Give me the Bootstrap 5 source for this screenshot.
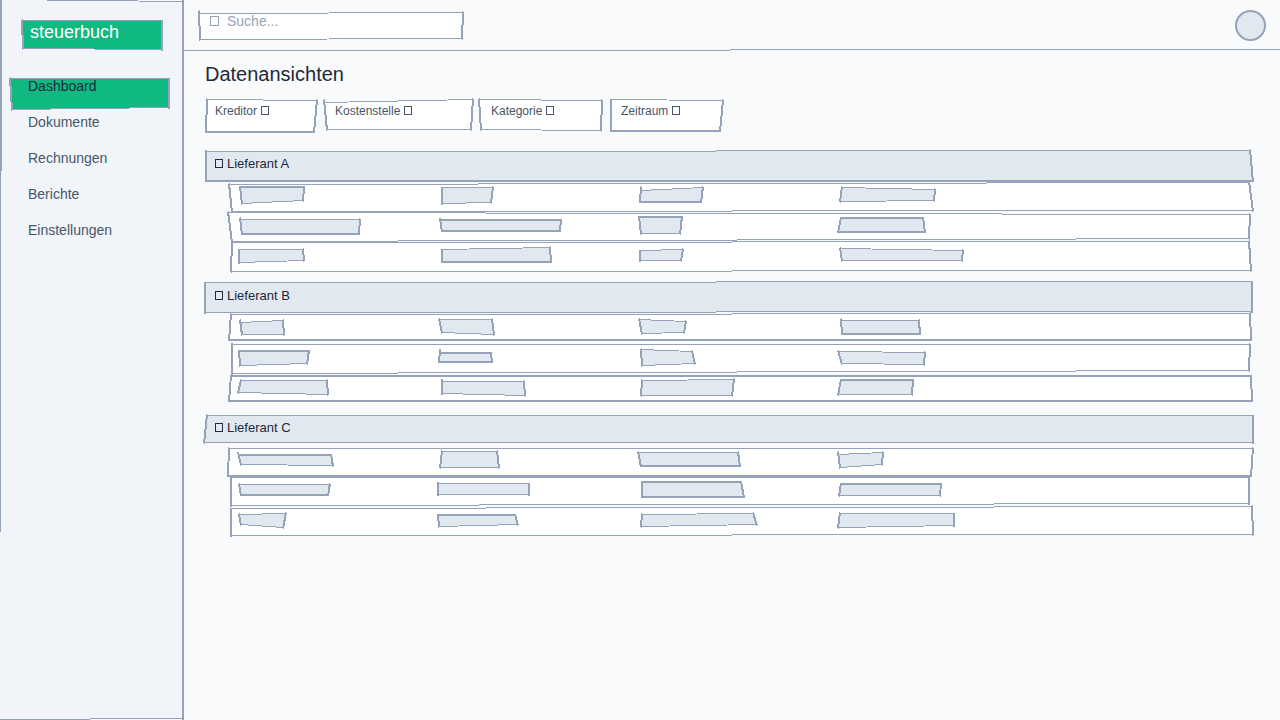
<!DOCTYPE html>
<html lang="de">
<head>
<meta charset="utf-8">
<meta name="viewport" content="width=device-width, initial-scale=1">
<title>steuerbuch – Datenansichten</title>
<link href="https://cdn.jsdelivr.net/npm/bootstrap@5.3.0/dist/css/bootstrap.min.css" rel="stylesheet">
<style>
:root { --line: #94a3b8; --soft: #e2e8f0; --ink: #1e293b; --muted: #475569; }
body { font-family: "Liberation Sans", Arial, sans-serif; font-size: 14px; line-height: 16px; color: var(--ink); background: #f8fafc; }
/* hand-drawn frames: an SVG behind the content of its element */
.sketch { position: relative; isolation: isolate; }
.sketch > svg.frame { position: absolute; inset: 0; width: 100%; height: 100%; overflow: visible; z-index: -1; pointer-events: none; }
.frame { stroke: var(--line); shape-rendering: crispEdges; }
.sidebar { width: 184px; --fill: #f1f5f9; padding: 20px 14px 0 10px; z-index: 1; }
.brand { --fill: #10b981; height: 28px; margin: 0 8px 30px 12px; padding: 2px 8px; font-size: 18px; line-height: 20px; color: #fff; }
.side-link { height: 36px; padding: 0 18px; color: var(--muted); }
.side-link.active { --fill: #10b981; color: var(--ink); }
.topbar { height: 50px; --fill: #f8fafc; padding: 10px 14px 0 16px; }
.search { width: 263px; height: 28px; margin-top: 2px; padding: 1px 10px 0; --fill: #fff; gap: 8px; }
.search input { height: 16px; min-width: 0; outline: 0; color: var(--ink); }
.search input::placeholder { color: var(--line); opacity: 1; }
.avatar { width: 31px; height: 31px; border: 2px solid var(--line); border-radius: 50%; background: var(--soft); }
.content { padding: 12px 28px 24px 22px; }
h1 { font-size: 20px; line-height: 24px; font-weight: 400; margin: 0 0 14px -1px; }
.filters { margin: 0 0 20px -1px; gap: 8px; }
.filter { --fill: #fff; height: 30px; padding: 4px 10px; font-size: 12px; line-height: 14px; color: var(--muted); gap: 4px; }
.size-s { width: 112px; } .size-m { width: 122px; } .size-l { width: 148px; }
.group { margin-bottom: 8px; }
.group-head { --fill: var(--soft); height: 30px; margin: 0 0 4px; padding: 6px 9px; font-size: 13px; line-height: 16px; font-weight: 400; gap: 4px; }
.entry { --fill: #fff; height: 30px; margin-left: 24px; padding: 0 12px 0 10px; display: grid; grid-template-columns: repeat(5, 1fr); }
.cell { --fill: var(--soft); }
.glyph { flex: none; fill: none; stroke: currentColor; shape-rendering: crispEdges; }
</style>
</head>
<body>
<div class="d-flex min-vh-100 overflow-hidden">
  <aside class="sidebar sketch flex-shrink-0" data-edge="0,-1,-2,1,-2,-2,-2,-1,1,1">
    <div class="brand sketch" data-edge="-1,0,-1,0,-1,29,0,28,1,1">steuerbuch</div>
    <nav class="d-flex flex-column">
      <a href="#" class="side-link sketch active text-decoration-none" aria-current="page" data-edge="-1,0,-2,0,-2,29,1,31,1,1">Dashboard</a>
      <a href="#" class="side-link text-decoration-none">Dokumente</a>
      <a href="#" class="side-link text-decoration-none">Rechnungen</a>
      <a href="#" class="side-link text-decoration-none">Berichte</a>
      <a href="#" class="side-link text-decoration-none">Einstellungen</a>
    </nav>
  </aside>
  <div class="flex-grow-1">
    <header class="topbar sketch d-flex justify-content-between align-items-start" data-edge="-2,-5,5,-5,5,49,-2,50,1,1">
      <div class="search sketch d-flex" data-edge="-2,1,-1,0,-2,26,-1,27,1,1,3">
        <svg class="glyph" width="9" height="16" color="#94a3b8" aria-hidden="true"><rect x=".5" y="3.5" width="8" height="9"/></svg>
        <input type="text" class="border-0 bg-transparent p-0 flex-grow-1" placeholder="Suche..." aria-label="Suche">
      </div>
      <div class="avatar"></div>
    </header>
    <main class="content">
      <h1>Datenansichten</h1>
      <div class="filters d-flex">
        <button type="button" class="filter size-s sketch d-flex border-0 bg-transparent" data-edge="1,-1,-1,0,-4,31,0,31,1,2">Kreditor <svg class="glyph" width="8" height="14" aria-hidden="true"><rect x=".5" y="2.5" width="7" height="8"/></svg></button>
        <button type="button" class="filter size-l sketch d-flex border-0 bg-transparent" data-edge="-2,2,-1,-1,-3,29,1,29,1,1,3">Kostenstelle <svg class="glyph" width="8" height="14" aria-hidden="true"><rect x=".5" y="2.5" width="7" height="8"/></svg></button>
        <button type="button" class="filter size-m sketch d-flex border-0 bg-transparent" data-edge="-3,-1,-2,0,-3,30,-1,29,1,1">Kategorie <svg class="glyph" width="8" height="14" aria-hidden="true"><rect x=".5" y="2.5" width="7" height="8"/></svg></button>
        <button type="button" class="filter size-s sketch d-flex border-0 bg-transparent" data-edge="-1,-1,-1,0,-4,30,-1,30,1,2">Zeitraum <svg class="glyph" width="8" height="14" aria-hidden="true"><rect x=".5" y="2.5" width="7" height="8"/></svg></button>
      </div>
      <div id="groups"></div>
    </main>
  </div>
</div>
<script src="https://cdn.jsdelivr.net/npm/bootstrap@5.3.0/dist/js/bootstrap.bundle.min.js"></script>
<script>
// Edge list: top-left, top-right, bottom-right, bottom-left corners,
// top and bottom line weight, and how far the left stroke runs past the top.
const groups = [
  { name: 'Lieferant A', edge: '-1,1,-3,0,0,30,-1,30,1,2,2', rows: [
    { edge: '-2,0,-4,-2,0,26,1,27,1,1', bars: ['-1,2,63,2,62,16,1,19,2,1', '1,3,52,3,50,18,1,19,1,1', '0,6,62,3,60,17,-1,17,1,2,4', '1,3,94,5,93,16,-1,17,1,1'] },
    { edge: '-3,-2,-3,0,-4,24,1,27,1,1', bars: ['-1,5,119,5,118,19,1,19,1,2,2', '-1,5,120,5,119,16,1,16,2,2,2', '-2,2,41,2,39,19,0,19,2,1', '0,3,82,3,84,17,-3,17,2,2'] },
    { edge: '1,-2,-4,-3,-2,26,0,27,1,1', bars: ['-2,5,62,5,63,16,-2,18,1,1', '1,5,109,3,110,17,1,17,1,2', '-1,6,42,5,40,16,-1,16,1,1', '-1,4,122,6,121,16,1,16,1,1'] } ] },
  { name: 'Lieferant B', edge: '-2,0,-1,-1,-1,29,-2,30,1,1,1', rows: [
    { edge: '0,-2,-3,-3,-2,23,-2,23,1,2', bars: ['-1,6,42,4,43,18,1,18,1,1,3', '-2,3,51,3,53,18,1,16,1,1', '-2,3,45,5,43,16,1,17,1,1', '0,4,78,4,79,17,1,17,1,2,2'] },
    { edge: '1,-2,-3,-2,-4,24,1,27,1,1,2', bars: ['-2,4,68,4,66,17,-1,19,2,1', '-1,6,50,6,51,15,-2,15,2,2,4', '0,3,51,5,54,17,1,19,1,1', '-3,5,84,6,83,18,1,17,1,1'] },
    { edge: '0,-1,-2,-1,-1,24,-2,24,2,2', bars: ['0,4,86,4,87,18,-3,16,1,1', '1,5,83,5,84,19,1,17,1,1,3', '1,4,93,3,91,19,0,19,1,1', '0,3,72,3,71,18,-3,18,2,1'] } ] },
  { name: 'Lieferant C', edge: '0,1,0,1,0,28,-3,28,1,1', rows: [
    { edge: '-2,0,0,0,-2,27,-3,27,1,2', bars: ['-3,6,90,6,92,17,0,16,2,1,3', '1,3,56,3,58,19,-1,19,1,1', '-3,4,97,4,99,17,0,17,1,2', '-3,6,42,4,41,16,-1,19,1,1,3'] },
    { edge: '0,-2,-4,-2,-4,25,0,27,2,1', bars: ['-2,6,89,6,87,16,0,16,1,2', '-3,5,88,5,88,16,-3,16,1,1,2', '1,3,100,3,103,18,1,18,2,2', '0,5,100,5,99,17,-2,17,2,1'] },
    { edge: '0,0,-1,-2,0,26,0,27,1,1', bars: ['-2,6,45,5,42,19,0,16,1,1', '-3,6,74,6,77,16,-2,18,2,1', '1,6,112,5,116,16,0,18,1,1', '-1,5,113,5,113,17,-3,19,1,1'] } ] }
];
document.getElementById('groups').innerHTML = groups.map(g => `
  <section class="group">
    <h2 class="group-head sketch d-flex" data-edge="${g.edge}">
      <svg class="glyph" width="8" height="16" aria-hidden="true"><rect x=".5" y="3.5" width="7" height="8"/></svg>${g.name}</h2>
    ${g.rows.map(r => `<div class="entry sketch" data-edge="${r.edge}">
      ${r.bars.map(b => `<div class="cell sketch" data-edge="${b}" data-fixed></div>`).join('')}</div>`).join('')}
  </section>`).join('');

function frame(el) {
  const [ax, ay, bx, by, cx, cy, dx, dy, t, b, over = 1] = el.dataset.edge.split(',').map(Number);
  const w = 'fixed' in el.dataset ? 0 : el.clientWidth;
  const h = cy < 0 ? el.clientHeight : 0;
  const A = [ax + 1, ay + t / 2], B = [bx + w + 1, by + t / 2];
  const C = [cx + w + 1, cy + h + b / 2], D = [dx + 1, dy + h + b / 2];
  let svg = el.querySelector(':scope > svg.frame');
  if (!svg) {
    svg = document.createElementNS('http://www.w3.org/2000/svg', 'svg');
    svg.setAttribute('class', 'frame');
    svg.setAttribute('aria-hidden', 'true');
    el.append(svg);
  }
  svg.innerHTML = `<path d="M${A}L${B}L${C}L${D}Z" stroke="none" style="fill:var(--fill)"/>
    <path d="M${A}L${B}" stroke-width="${t}"/><path d="M${C}L${D}" stroke-width="${b}"/>
    <path d="M${A[0]},${A[1] - over}L${D[0]},${D[1] + 1}M${B[0]},${B[1] - 1}L${C[0]},${C[1] + 1}" stroke-width="2"/>`;
}
const drawAll = () => document.querySelectorAll('[data-edge]').forEach(frame);
drawAll();
addEventListener('resize', drawAll);
</script>
</body>
</html>
